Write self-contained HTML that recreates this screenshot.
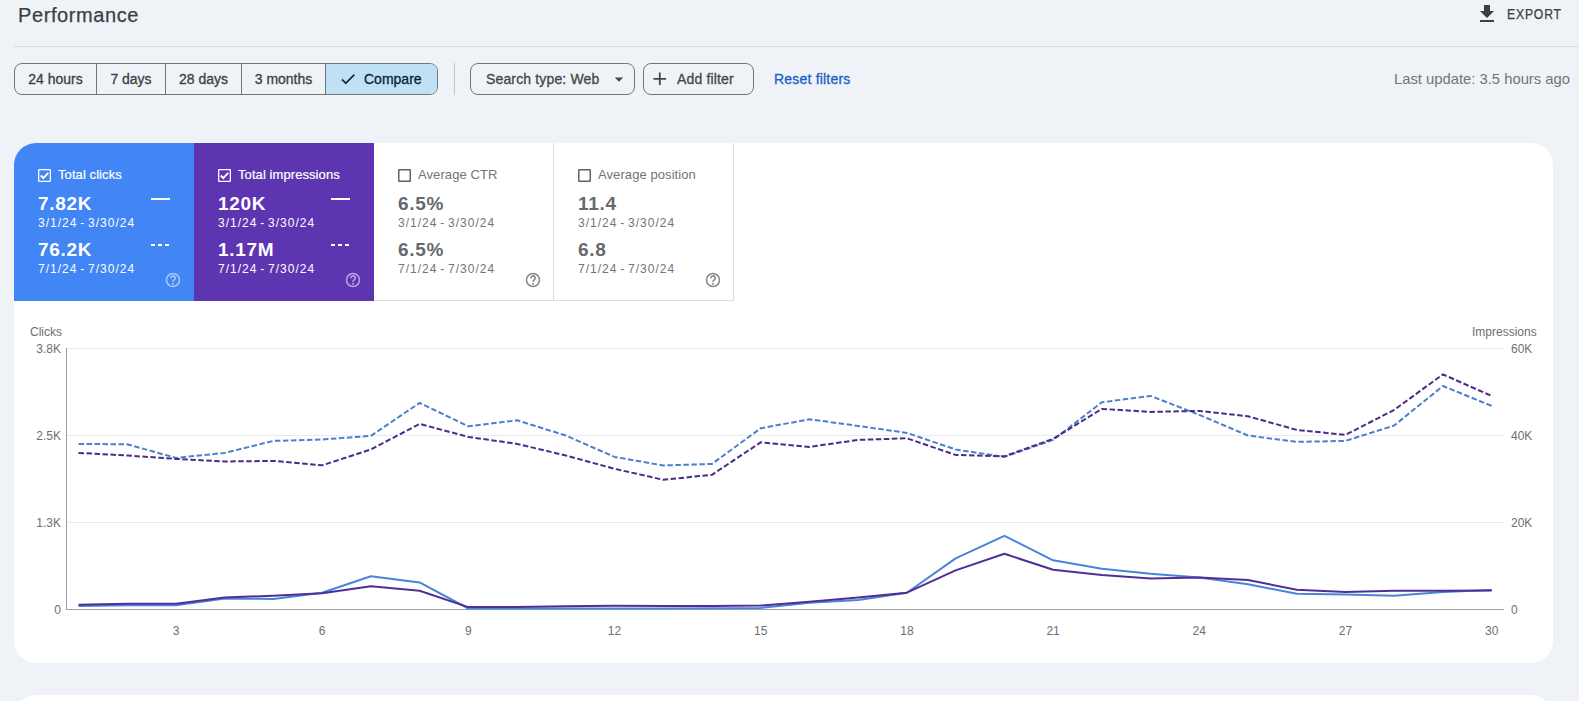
<!DOCTYPE html>
<html><head><meta charset="utf-8"><title>Performance</title>
<style>
*{box-sizing:border-box;margin:0;padding:0}
html,body{width:1579px;height:701px;overflow:hidden}
body{background:#eff2f7;font-family:"Liberation Sans",sans-serif;position:relative;color:#3c4043}
.abs{position:absolute;white-space:nowrap;line-height:1}
.title{left:18px;top:5px;font-size:20px;color:#3c4043;letter-spacing:0.6px;-webkit-text-stroke:0.25px #3c4043}
.export{position:absolute;left:1475px;top:2px;width:100px;height:24px}
.export span{position:absolute;left:32px;top:4.5px;font-size:14px;line-height:1;letter-spacing:0.95px;color:#3c4043;-webkit-text-stroke:0.25px #3c4043;transform:scaleX(0.87);transform-origin:0 0}
.hr{position:absolute;left:14px;top:46px;width:1565px;height:1px;background:#dadce0}
.seg{position:absolute;left:14px;top:63px;width:424px;height:32px;border:1px solid #747775;border-radius:8px;overflow:hidden;display:flex}
.seg div{height:100%;border-right:1px solid #747775;font-size:14px;line-height:30px;color:#3c4043;text-align:center;position:relative;-webkit-text-stroke:0.3px currentColor}
.seg div:last-child{border-right:none;background:#c0e0f6;color:#0a2239}
.vsep{position:absolute;left:454px;top:63px;width:1px;height:32px;background:#c4c7c5}
.chip{position:absolute;top:63px;height:32px;border:1px solid #747775;border-radius:8px;font-size:14px;line-height:30px;color:#444746;-webkit-text-stroke:0.3px currentColor;letter-spacing:0.15px}
.link{position:absolute;left:774px;top:72px;font-size:14px;line-height:1;color:#1a5fc8;letter-spacing:0.2px;-webkit-text-stroke:0.3px currentColor}
.upd{position:absolute;right:9px;top:71.5px;font-size:14.8px;line-height:1;color:#70757a}
.card{position:absolute;left:14px;top:143px;width:1539px;height:520px;background:#fff;border-radius:22px}
.card2{position:absolute;left:14px;top:695px;width:1539px;height:200px;background:#fff;border-radius:22px}
.mbox{position:absolute;top:143px;width:180px;height:157.5px;border-right:1px solid #dadce0;border-bottom:1px solid #dadce0}
.mbox.sel{border:none}
.mbox:first-of-type{border-top-left-radius:24px}
.cb{position:absolute;left:24px;top:26px}
.mlabel{position:absolute;left:44px;top:25px;font-size:13px;line-height:14px;white-space:nowrap;letter-spacing:0.08px;-webkit-text-stroke:0.2px currentColor}
.mval{position:absolute;left:24px;font-size:19px;font-weight:700;line-height:1;white-space:nowrap;letter-spacing:0.7px}
.v1{top:50.5px} .v2{top:96.5px}
.mdate{position:absolute;left:24px;font-size:12px;line-height:1;white-space:nowrap;letter-spacing:1.0px;word-spacing:-1.5px}
.d1{top:73.5px} .d2{top:119.5px}
.leg{position:absolute;left:137px;width:19px;height:2px}
.leg.solid{top:55px;background:#fff}
.leg.dash{top:101px;display:flex;gap:3px}
.leg.dash i{display:block;width:4px;height:2px;background:#fff}
.help{position:absolute;left:150px;top:128px}
.chart{position:absolute;left:0;top:0}
</style></head><body>
<div class="abs title">Performance</div>
<div class="export"><svg width="24" height="24" viewBox="0 0 24 24"><path d="M19 9h-4V3H9v6H5l7 7 7-7zM5 18v2h14v-2H5z" fill="#3c4043"/></svg><span>EXPORT</span></div>
<div class="hr"></div>
<div class="seg">
  <div style="width:82px">24 hours</div>
  <div style="width:69px">7 days</div>
  <div style="width:76px">28 days</div>
  <div style="width:84px">3 months</div>
  <div style="width:111px"><svg style="position:absolute;left:12.5px;top:6px" width="18" height="18" viewBox="0 0 24 24"><path d="M9 16.17L4.83 12l-1.42 1.41L9 19 21 7l-1.41-1.41z" fill="#0a2239" stroke="#0a2239" stroke-width="0.4"/></svg><span style="position:absolute;left:38px;top:0">Compare</span></div>
</div>
<div class="vsep"></div>
<div class="chip" style="left:470px;width:165px"><span style="position:absolute;left:15px;top:0">Search type: Web</span><svg style="position:absolute;left:142.5px;top:11px" width="10" height="10" viewBox="0 0 10 10"><path d="M0.8 2.6h8.4L5 6.8z" fill="#444746"/></svg></div>
<div class="chip" style="left:643px;width:111px"><svg style="position:absolute;left:5.4px;top:4.2px" width="21.6" height="21.6" viewBox="0 0 24 24"><path d="M19 13h-6v6h-2v-6H5v-2h6V5h2v6h6v2z" fill="#444746"/></svg><span style="position:absolute;left:33px;top:0">Add filter</span></div>
<div class="link">Reset filters</div>
<div class="upd">Last update: 3.5 hours ago</div>
<div class="card"></div>
<div class="card2"></div>
<div class="mbox sel" style="left:14px;background:#4285f4;color:#fff;border-top-left-radius:22px">
  <svg class="cb" width="13" height="13" viewBox="0 0 13 13"><rect x="0.65" y="0.65" width="11.7" height="11.7" rx="0.5" fill="none" stroke="#fff" stroke-width="1.3"/><path d="M2.7 6.5l2.6 2.6 4.9-5.2" fill="none" stroke="#fff" stroke-width="1.9"/></svg><div class="mlabel" style="color:#fff">Total clicks</div>
  <div class="mval v1">7.82K</div><div class="mdate d1" style="color:#fff">3/1/24 - 3/30/24</div>
  <div class="mval v2">76.2K</div><div class="mdate d2" style="color:#fff">7/1/24 - 7/30/24</div>
  <div class="leg solid"></div><div class="leg dash"><i></i><i></i><i></i></div><svg class="help" width="18" height="18" viewBox="0 0 18 18"><circle cx="9" cy="9" r="6.5" fill="none" stroke="rgba(255,255,255,0.55)" stroke-width="1.5"/><path d="M6.8 7.2a2.2 2.2 0 1 1 3.3 1.9c-.75.5-1.1.85-1.1 1.6" fill="none" stroke="rgba(255,255,255,0.55)" stroke-width="1.7"/><rect x="8.1" y="11.9" width="1.8" height="1.7" fill="rgba(255,255,255,0.55)"/></svg>
</div><div class="mbox sel" style="left:194px;background:#5e35b1;color:#fff">
  <svg class="cb" width="13" height="13" viewBox="0 0 13 13"><rect x="0.65" y="0.65" width="11.7" height="11.7" rx="0.5" fill="none" stroke="#fff" stroke-width="1.3"/><path d="M2.7 6.5l2.6 2.6 4.9-5.2" fill="none" stroke="#fff" stroke-width="1.9"/></svg><div class="mlabel" style="color:#fff">Total impressions</div>
  <div class="mval v1">120K</div><div class="mdate d1" style="color:#fff">3/1/24 - 3/30/24</div>
  <div class="mval v2">1.17M</div><div class="mdate d2" style="color:#fff">7/1/24 - 7/30/24</div>
  <div class="leg solid"></div><div class="leg dash"><i></i><i></i><i></i></div><svg class="help" width="18" height="18" viewBox="0 0 18 18"><circle cx="9" cy="9" r="6.5" fill="none" stroke="rgba(255,255,255,0.55)" stroke-width="1.5"/><path d="M6.8 7.2a2.2 2.2 0 1 1 3.3 1.9c-.75.5-1.1.85-1.1 1.6" fill="none" stroke="rgba(255,255,255,0.55)" stroke-width="1.7"/><rect x="8.1" y="11.9" width="1.8" height="1.7" fill="rgba(255,255,255,0.55)"/></svg>
</div><div class="mbox" style="left:374px;background:#fff;color:#67696d">
  <svg class="cb" width="13" height="13" viewBox="0 0 13 13"><rect x="0.75" y="0.75" width="11.5" height="11.5" rx="0.5" fill="none" stroke="#5f6368" stroke-width="1.5"/></svg><div class="mlabel" style="color:#70757a;-webkit-text-stroke:0">Average CTR</div>
  <div class="mval v1">6.5%</div><div class="mdate d1" style="color:#70757a">3/1/24 - 3/30/24</div>
  <div class="mval v2">6.5%</div><div class="mdate d2" style="color:#70757a">7/1/24 - 7/30/24</div>
  <svg class="help" width="18" height="18" viewBox="0 0 18 18"><circle cx="9" cy="9" r="6.5" fill="none" stroke="#85898d" stroke-width="1.5"/><path d="M6.8 7.2a2.2 2.2 0 1 1 3.3 1.9c-.75.5-1.1.85-1.1 1.6" fill="none" stroke="#85898d" stroke-width="1.7"/><rect x="8.1" y="11.9" width="1.8" height="1.7" fill="#85898d"/></svg>
</div><div class="mbox" style="left:554px;background:#fff;color:#67696d">
  <svg class="cb" width="13" height="13" viewBox="0 0 13 13"><rect x="0.75" y="0.75" width="11.5" height="11.5" rx="0.5" fill="none" stroke="#5f6368" stroke-width="1.5"/></svg><div class="mlabel" style="color:#70757a;-webkit-text-stroke:0">Average position</div>
  <div class="mval v1">11.4</div><div class="mdate d1" style="color:#70757a">3/1/24 - 3/30/24</div>
  <div class="mval v2">6.8</div><div class="mdate d2" style="color:#70757a">7/1/24 - 7/30/24</div>
  <svg class="help" width="18" height="18" viewBox="0 0 18 18"><circle cx="9" cy="9" r="6.5" fill="none" stroke="#85898d" stroke-width="1.5"/><path d="M6.8 7.2a2.2 2.2 0 1 1 3.3 1.9c-.75.5-1.1.85-1.1 1.6" fill="none" stroke="#85898d" stroke-width="1.7"/><rect x="8.1" y="11.9" width="1.8" height="1.7" fill="#85898d"/></svg>
</div>

<svg class="chart" width="1579" height="701" viewBox="0 0 1579 701">
  <g stroke="#e8eaed" stroke-width="1">
    <line x1="67" y1="348.5" x2="1504" y2="348.5"/>
    <line x1="67" y1="435.5" x2="1504" y2="435.5"/>
    <line x1="67" y1="522.5" x2="1504" y2="522.5"/>
  </g>
  <line x1="66.5" y1="348" x2="66.5" y2="609.5" stroke="#9aa0a6" stroke-width="1"/>
  <line x1="66" y1="609.5" x2="1504" y2="609.5" stroke="#9aa0a6" stroke-width="1"/>
  <g font-family="Liberation Sans, sans-serif" font-size="12" fill="#6b6f74">
    <text x="62" y="336" text-anchor="end">Clicks</text>
    <text x="61" y="353" text-anchor="end">3.8K</text>
    <text x="61" y="440" text-anchor="end">2.5K</text>
    <text x="61" y="527" text-anchor="end">1.3K</text>
    <text x="61" y="614" text-anchor="end">0</text>
    <text x="1472" y="336">Impressions</text>
    <text x="1511" y="353">60K</text>
    <text x="1511" y="440">40K</text>
    <text x="1511" y="527">20K</text>
    <text x="1511" y="614">0</text>
  </g>
  <g font-family="Liberation Sans, sans-serif" font-size="12" fill="#6b6f74" text-anchor="middle">
<text x="176.0" y="635">3</text><text x="322.1" y="635">6</text><text x="468.3" y="635">9</text><text x="614.5" y="635">12</text><text x="760.7" y="635">15</text><text x="906.9" y="635">18</text><text x="1053.1" y="635">21</text><text x="1199.3" y="635">24</text><text x="1345.5" y="635">27</text><text x="1491.7" y="635">30</text>
  </g>
  <g fill="none" stroke-width="2" stroke-linejoin="round">
    <polyline points="78.5,443.9 127.2,444.3 176.0,457.9 224.7,452.9 273.4,440.9 322.1,439.5 370.9,435.9 419.6,402.9 468.3,426.3 517.1,420.3 565.8,435.5 614.5,456.9 663.3,465.5 712.0,463.9 760.7,428.3 809.4,419.3 858.2,425.9 906.9,432.9 955.6,449.5 1004.4,456.9 1053.1,439.9 1101.8,402.3 1150.6,395.9 1199.3,414.9 1248.0,435.5 1296.8,441.9 1345.5,440.9 1394.2,425.5 1442.9,386.0 1491.7,405.9" stroke="#4a80cc" stroke-dasharray="5.5 2.5"/>
    <polyline points="78.5,452.9 127.2,455.5 176.0,458.9 224.7,461.5 273.4,460.9 322.1,465.3 370.9,449.5 419.6,423.9 468.3,436.9 517.1,443.9 565.8,455.5 614.5,468.8 663.3,479.8 712.0,474.8 760.7,442.3 809.4,446.9 858.2,439.9 906.9,438.3 955.6,454.9 1004.4,456.3 1053.1,438.9 1101.8,408.9 1150.6,411.9 1199.3,410.9 1248.0,416.3 1296.8,429.9 1345.5,434.9 1394.2,409.9 1442.9,374.4 1491.7,396.0" stroke="#4a2d88" stroke-dasharray="5.5 2.5"/>
    <polyline points="78.5,606.0 127.2,605.2 176.0,605.2 224.7,598.4 273.4,599.0 322.1,592.7 370.9,576.2 419.6,582.4 468.3,608.5 517.1,608.6 565.8,608.6 614.5,608.6 663.3,608.5 712.0,608.3 760.7,607.9 809.4,602.8 858.2,599.9 906.9,592.7 955.6,558.4 1004.4,535.8 1053.1,560.3 1101.8,568.8 1150.6,573.8 1199.3,577.6 1248.0,584.3 1296.8,593.8 1345.5,594.6 1394.2,595.7 1442.9,591.9 1491.7,590.0" stroke="#4a84d8"/>
    <polyline points="78.5,604.8 127.2,603.7 176.0,603.7 224.7,597.4 273.4,595.7 322.1,593.3 370.9,586.2 419.6,590.8 468.3,607.1 517.1,606.9 565.8,606.2 614.5,605.8 663.3,606.0 712.0,606.0 760.7,605.6 809.4,601.8 858.2,597.6 906.9,592.7 955.6,570.4 1004.4,553.8 1053.1,569.8 1101.8,575.1 1150.6,578.5 1199.3,577.6 1248.0,580.0 1296.8,589.8 1345.5,591.9 1394.2,590.8 1442.9,590.8 1491.7,590.4" stroke="#4f2f96"/>
  </g>
</svg>
</body></html>
